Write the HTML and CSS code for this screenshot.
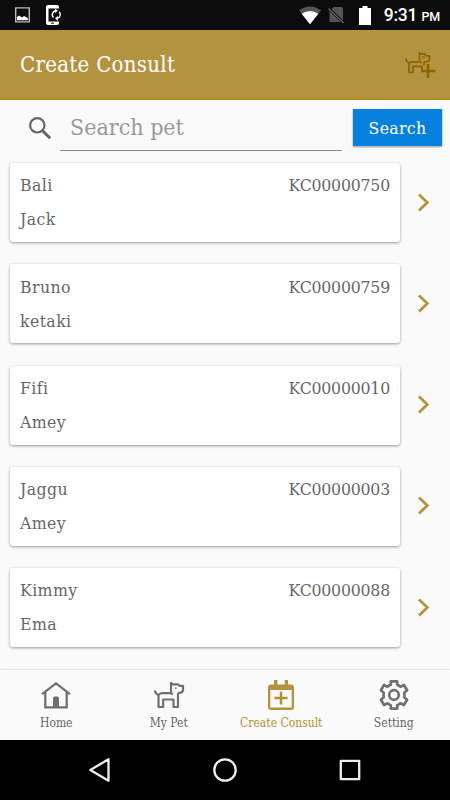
FILE: index.html
```html
<!DOCTYPE html>
<html lang="en">
<head>
    <meta charset="UTF-8">
    <meta name="viewport" content="width=device-width, initial-scale=1.0">
    <title>Create Consult</title>
    <link rel="stylesheet" href="styles.css">
</head>
<body>
    <div class="status-bar">
        <div class="status-left">
            <svg width="15" height="16" viewBox="0 0 15 16"><path d="M.7.9h13.6v14H.7z" fill="none" stroke="#bbb" stroke-width="1.4"/><path d="M2 13.300V10l2-1.500 1.500 1L7 10.500 9 9l3.800 2v2.300z" fill="#fff"/></svg>
            <svg width="17" height="20" viewBox="0 0 17 20"><path d="M2 0h9q2 0 2 2v1.500H2.500v13H13V18q0 2-2 2H2q-2 0-2-2V2Q0 0 2 0z" fill="#fff"/><path d="M5 18.200h3" stroke="#0c0c0c"/><path d="M7.500 12.500A4 4 0 0 1 9.500 5.700M13.300 6.800A4 4 0 0 1 11.300 13.300" fill="none" stroke="#fff" stroke-width="1.500"/><path d="M9 3.500l3 2.200L9 8zM11.800 11v5L9 13.300z" fill="#fff"/></svg>
        </div>
        <div class="status-right">
            <svg width="22" height="19" viewBox="0 0 22 19"><path d="M0 4.300Q11-3.500 22 4.300L11 18.300z" fill="#555"/><path d="M2.700 7.800Q11 2.200 19.300 7.800L11 18.300z" fill="#fff"/></svg>
            <svg width="17" height="18" viewBox="0 0 17 18"><path d="M5.500 1H13q2 0 2 2v13H1.500V5z" fill="#555"/><path d="M0 1.500l15.500 15.500" stroke="#0c0c0c" stroke-width="3"/><path d="M.5 2.500l15 14.500" stroke="#666" stroke-width="1.300"/></svg>
            <svg class="battery" width="12" height="19" viewBox="0 0 12 19"><path d="M3.500 0h5v2H12v17H0V2h3.500z" fill="#fff"/></svg>
            <div class="clock">9:31 <span>PM</span></div>
        </div>
    </div>

    <div class="header">
        <h1>Create Consult</h1>
        <svg width="32" height="28" viewBox="0 0 32 28" fill="none" stroke="#8a6500" stroke-width="1.700" stroke-linejoin="round">
            <path d="M2 7.500q0 3 3.300 4.500Q6.500 10.800 9.500 10.800h6V1.500l1 1.300h4.200l1.200 2h3.600v3.200q0 2-2 2.400l-3.500.8v3.300M5 12v9.500h4v-6.200h9v4M15.500 10.500l2 1.500"/>
            <path d="M24 13v14M17 20h14.500" stroke-width="2.700"/>
            <circle cx="19.500" cy="6.200" r=".4"/>
        </svg>
    </div>

    <div class="search-row">
        <svg width="22" height="23" viewBox="0 0 22 23" fill="none" stroke="#666"><circle cx="8.300" cy="8.300" r="7.200" stroke-width="2.200"/><path d="M13.300 13.500l7.800 7.600" stroke-width="3"/></svg>
        <input class="search-input" type="text" placeholder="Search pet">
        <button class="search-button">Search</button>
    </div>

    <div class="list">
        <div class="row">
            <div class="card">
                <div class="card-top"><span class="pet">Bali</span><span class="code">KC00000750</span></div>
                <div class="owner">Jack</div>
            </div>
            <svg class="chevron" width="13" height="20" viewBox="0 0 13 20"><path d="M2 1.500l8.300 8L2 17.500"/></svg>
        </div>
        <div class="row">
            <div class="card">
                <div class="card-top"><span class="pet">Bruno</span><span class="code">KC00000759</span></div>
                <div class="owner">ketaki</div>
            </div>
            <svg class="chevron" width="13" height="20" viewBox="0 0 13 20"><path d="M2 1.500l8.300 8L2 17.500"/></svg>
        </div>
        <div class="row">
            <div class="card">
                <div class="card-top"><span class="pet">Fifi</span><span class="code">KC00000010</span></div>
                <div class="owner">Amey</div>
            </div>
            <svg class="chevron" width="13" height="20" viewBox="0 0 13 20"><path d="M2 1.500l8.300 8L2 17.500"/></svg>
        </div>
        <div class="row">
            <div class="card">
                <div class="card-top"><span class="pet">Jaggu</span><span class="code">KC00000003</span></div>
                <div class="owner">Amey</div>
            </div>
            <svg class="chevron" width="13" height="20" viewBox="0 0 13 20"><path d="M2 1.500l8.300 8L2 17.500"/></svg>
        </div>
        <div class="row">
            <div class="card">
                <div class="card-top"><span class="pet">Kimmy</span><span class="code">KC00000088</span></div>
                <div class="owner">Ema</div>
            </div>
            <svg class="chevron" width="13" height="20" viewBox="0 0 13 20"><path d="M2 1.500l8.300 8L2 17.500"/></svg>
        </div>
    </div>

    <div class="tabs">
        <div class="tab">
            <svg width="32" height="32" viewBox="0 0 32 32"><path d="M2 14.200L16 3.400l14 10.800M5.300 12v15.300h21.400V12" fill="none" stroke="#707070" stroke-width="2.300"/><path d="M13 27.500V18q0-1.500 1.500-1.500h3Q19 16.500 19 18v9.500z" fill="#707070"/></svg>
            <span>Home</span>
        </div>
        <div class="tab">
            <svg width="32" height="32" viewBox="0 0 32 32" fill="none" stroke="#707070" stroke-width="2.200" stroke-linejoin="round"><path d="M2 10.500q0 3 3.500 4.500Q7 13.200 10 13.200h7.500l2.500 1M5.500 15v12h4.700v-7.500h10.300V27H25V14l1-1.200q4 0 4-2.800V5.800h-3.500l-1.500-1.500h-5.500l-1.500-1.500v10.400"/><circle cx="22.800" cy="8.300" r=".3" stroke-width="1.300"/></svg>
            <span>My Pet</span>
        </div>
        <div class="tab active">
            <svg width="32" height="32" viewBox="0 0 32 32"><path d="M6 4.500h3V0h3.300v4.500h7.400V0H23v4.500h3q3 0 3 3V27q0 3-3 3H6q-3 0-3-3V7.500q0-3 3-3z" fill="#b39340"/><path d="M5.300 10h21.400v17.500H5.300z" fill="#fafafa"/><path d="M16 11.500V24.500M9.500 18h13" stroke="#b1902f" stroke-width="2.500"/></svg>
            <span>Create Consult</span>
        </div>
        <div class="tab">
            <svg width="32" height="32" viewBox="0 0 32 32" fill="none" stroke="#707070" stroke-width="2.700" stroke-linejoin="round"><path d="M12.800 1.400h6.400v3.400q1.700.6 3.300 1.900l3.400-1.700 3.200 5.300-2.800 2.400q.4 2.300 0 4.600l2.800 2.400-3.200 5.300-3.400-1.700q-1.600 1.300-3.300 1.900v3.400h-6.400v-3.400q-1.700-.6-3.300-1.900L6.100 25l-3.200-5.300 2.800-2.400q-.4-2.300 0-4.600l-2.800-2.400L6.100 5l3.400 1.700q1.600-1.300 3.300-1.900z"/><circle cx="16" cy="15" r="4.800"/></svg>
            <span>Setting</span>
        </div>
    </div>

    <div class="nav-bar">
        <svg width="24" height="26" viewBox="0 0 24 26"><path d="M20.500 2.300v21.400L2.300 13z"/></svg>
        <svg width="26" height="26" viewBox="0 0 26 26"><circle cx="13" cy="13" r="10.700"/></svg>
        <svg width="24" height="26" viewBox="0 0 24 26"><path d="M2.800 3.800h18.400v18.400H2.800z"/></svg>
    </div>
</body>
</html>
```

FILE: styles.css
```css
* {
    box-sizing: border-box;
}

body {
    margin: 0;
    width: 450px;
    height: 800px;
    overflow: hidden;
    display: flex;
    flex-direction: column;
    background: #fafafa;
    color: #666;
    font-family: "Roboto Slab", "DejaVu Serif Condensed", "DejaVu Serif", serif;
}

svg {
    display: block;
    flex: none;
}

.status-bar {
    height: 30px;
    flex: none;
    display: flex;
    justify-content: space-between;
    align-items: center;
    padding: 0 10px 0 15px;
    background: #0c0c0c;
}

.status-left,
.status-right {
    display: flex;
    align-items: center;
}

.status-left {
    gap: 16px;
}

.status-right {
    gap: 7px;
}

.battery {
    margin-left: 7px;
}

.clock {
    margin-left: 6px;
    color: #fff;
    font: 500 17.5px/30px Roboto, sans-serif;
    letter-spacing: -0.2px;
    padding-top: 2px;
}

.clock span {
    font-size: 12.5px;
}

.header {
    height: 70px;
    flex: none;
    display: flex;
    justify-content: space-between;
    align-items: center;
    padding: 0 14px 0 20px;
    background: #b39340;
    border-bottom: 1px solid #b08b13;
}

h1 {
    margin: 0;
    color: #fff;
    font-size: 22px;
    font-weight: 400;
    line-height: 30px;
    letter-spacing: 0.3px;
}

.search-row {
    height: 63px;
    flex: none;
    display: flex;
    align-items: flex-start;
    padding: 9px 8px 0 29px;
}

.search-row svg {
    margin-top: 8px;
}

.search-input {
    width: 282px;
    height: 42px;
    margin-left: 9px;
    padding: 0 10px 5px;
    border: 0;
    border-bottom: 1px solid #888;
    background: none;
    font-family: inherit;
    font-size: 23px;
}

.search-input::placeholder {
    color: #999;
}

.search-button {
    width: 89px;
    height: 37px;
    margin-left: 11px;
    padding: 0;
    border: 0;
    background: #0680df;
    color: #fff;
    font-family: inherit;
    font-size: 17.5px;
    letter-spacing: 0.3px;
    box-shadow: 0 1px 2px rgba(0, 0, 0, 0.4);
}

.list {
    height: 507px;
    flex: none;
    display: flex;
    flex-direction: column;
    gap: 22.25px;
    padding-left: 10px;
}

.row {
    display: flex;
    align-items: center;
    gap: 17px;
}

.card {
    width: 390px;
    height: 79px;
    padding: 5.4px 10px;
    border-radius: 3px;
    background: #fff;
    font-size: 17.5px;
    line-height: 34px;
    letter-spacing: 0.4px;
    box-shadow: 0 1px 3px rgba(0, 0, 0, 0.4);
}

.card-top {
    display: flex;
    justify-content: space-between;
}

.code {
    letter-spacing: -0.2px;
}

.chevron {
    fill: none;
    stroke: #b39340;
    stroke-width: 2.8;
}

.tabs {
    height: 70px;
    flex: none;
    display: grid;
    grid-template-columns: repeat(4, 1fr);
    padding-top: 10px;
    background: #fafafa;
    box-shadow: 0 0 2px rgba(0, 0, 0, 0.25);
}

.tab {
    display: flex;
    flex-direction: column;
    align-items: center;
    font-size: 12px;
    line-height: 16px;
    gap: 3px;
}

.active {
    color: #b1902f;
}

.nav-bar {
    flex: 1;
    display: flex;
    justify-content: center;
    align-items: center;
    gap: 100px;
    background: #000;
}

.nav-bar svg {
    fill: none;
    stroke: #eee;
    stroke-width: 2.3;
    stroke-linejoin: round;
}
```
